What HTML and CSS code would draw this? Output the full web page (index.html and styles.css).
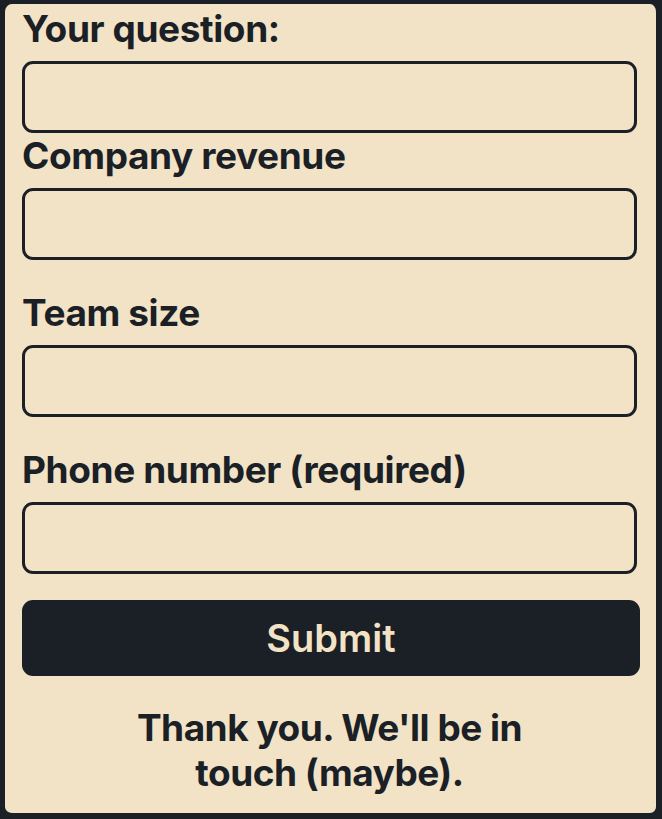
FILE: index.html
```html
<!DOCTYPE html>
<html>
<head>
    <title>Contact us</title>
    <link rel="stylesheet" href="styles.css">
</head>
<body>
    <form class="lead-form" onsubmit="return false">
        <div class="field field-first">
            <label for="question">Your question:</label>
            <input type="text" id="question">
        </div>
        <div class="field">
            <label for="revenue">Company revenue</label>
            <input type="text" id="revenue">
        </div>
        <div class="field">
            <label for="team">Team size</label>
            <input type="text" id="team">
        </div>
        <div class="field field-last">
            <label for="phone">Phone number (required)</label>
            <input type="tel" id="phone">
        </div>
        <button type="submit">Submit</button>
        <p class="thanks">Thank you. We'll be in touch (maybe).</p>
    </form>
</body>
</html>
```

FILE: styles.css
```css
body {
    margin: 0;
    background: #1b1f26;
    font-family: Inter, "Noto Sans", sans-serif;
    color: #1b1f26;
}
.lead-form {
    box-sizing: border-box;
    height: 819px;
    margin: 0;
    border: 5px solid #1b1f26;
    border-width: 4px 6px 6px 5px;
    border-radius: 12px;
    background: #f2e2c6;
    padding: 4px 19px 0 17px;
    display: flex;
    flex-direction: column;
}
.field {
    display: flex;
    flex-direction: column;
    margin-bottom: 32px;
}
.field-first {
    margin-bottom: 2px;
}
.field-last {
    margin-bottom: 26px;
}
label {
    font-size: 37px;
    font-weight: 700;
    letter-spacing: -0.4px;
    line-height: 42px;
    margin-bottom: 11px;
}
input {
    box-sizing: border-box;
    height: 72px;
    width: 100%;
    margin: 0;
    border: 3px solid #1b1f26;
    border-radius: 11px;
    background: #f2e2c6;
    font: inherit;
    font-size: 28px;
    padding: 0 14px;
}
button {
    height: 76px;
    margin: 0 -3px 0 0;
    border: none;
    border-radius: 11px;
    background: #1b1f26;
    color: #f2e2c6;
    font-family: inherit;
    font-size: 38px;
    font-weight: 600;
    cursor: pointer;
}
.thanks {
    margin: 29px auto 0;
    max-width: 440px;
    text-align: center;
    font-size: 37px;
    font-weight: 700;
    letter-spacing: -0.5px;
    line-height: 45px;
}
```
